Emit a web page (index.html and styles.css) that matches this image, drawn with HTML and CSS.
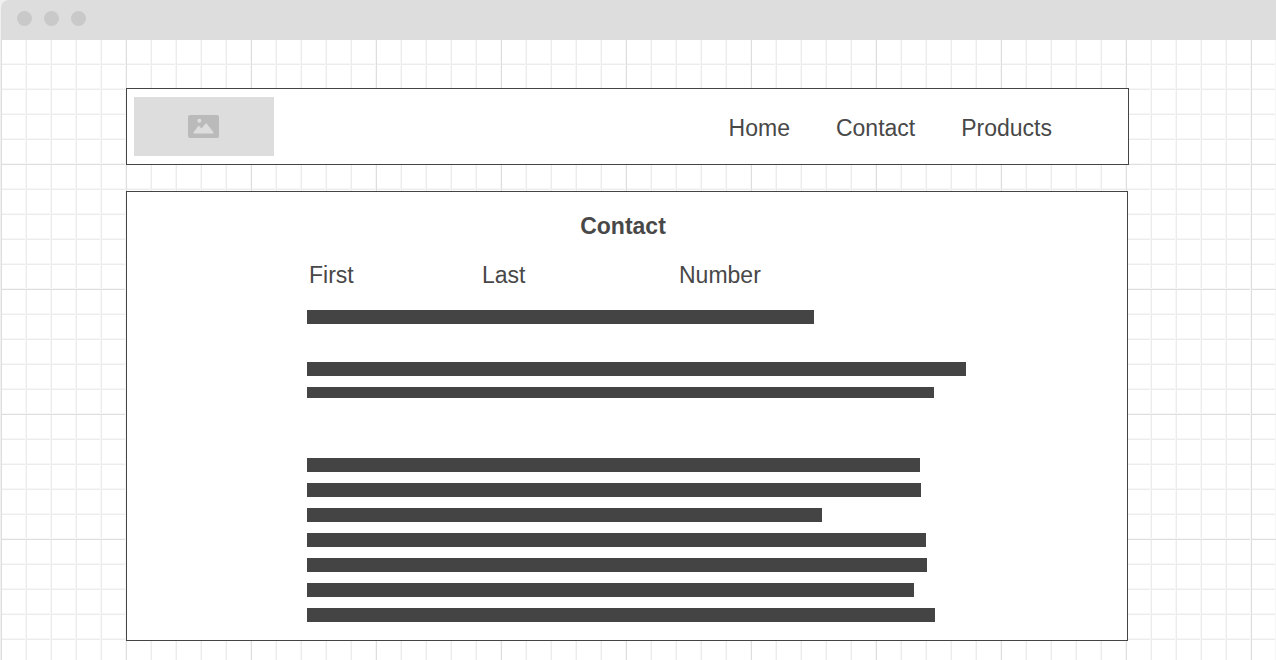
FILE: index.html
```html
<!DOCTYPE html>
<html lang="en">
<head>
<meta charset="utf-8">
<meta name="viewport" content="width=device-width, initial-scale=1">
<title>Contact</title>
<link rel="stylesheet" href="styles.css">
</head>
<body>
<div class="window">
  <div class="titlebar">
    <span class="dot"></span>
    <span class="dot"></span>
    <span class="dot"></span>
  </div>
  <div class="canvas">
    <header class="header">
      <div class="logo">
        <svg class="logo-icon" viewBox="0 0 31 23" role="img" aria-label="Logo">
          <rect width="31" height="23" rx="2" fill="#bababa"/>
          <circle cx="11.3" cy="5.8" r="2" fill="#ddd"/>
          <path d="M5.6 17.2 10.7 10.6 13.4 13.4 18.2 8 25.5 17.2 Q26 18.4 24.8 18.4 H6.2 Q5 18.4 5.6 17.2Z" fill="#ddd"/>
        </svg>
      </div>
      <nav class="nav">
        <a href="#home">Home</a>
        <a href="#contact">Contact</a>
        <a href="#products">Products</a>
      </nav>
    </header>
    <main class="panel">
      <h1 class="title">Contact</h1>
      <div class="columns">
        <span>First</span>
        <span>Last</span>
        <span>Number</span>
      </div>
      <div class="group">
        <div class="bar" style="width: 50.7%"></div>
      </div>
      <div class="group group-pair">
        <div class="bar" style="width: 65.9%"></div>
        <div class="bar bar-thin" style="width: 62.7%"></div>
      </div>
      <div class="group group-list">
        <div class="bar" style="width: 61.3%"></div>
        <div class="bar" style="width: 61.4%"></div>
        <div class="bar" style="width: 51.5%"></div>
        <div class="bar" style="width: 61.9%"></div>
        <div class="bar" style="width: 62%"></div>
        <div class="bar" style="width: 60.7%"></div>
        <div class="bar" style="width: 62.8%"></div>
      </div>
    </main>
  </div>
</div>
</body>
</html>
```
FILE: styles.css
```css
* {
  box-sizing: border-box;
}

body {
  margin: 0;
  background: #f0f0f0;
  color: #484848;
  font: 23px/26px "Liberation Sans", Arial, sans-serif;
}

.window {
  display: flex;
  flex-direction: column;
  min-height: 100vh;
  margin-left: 1px;
}

.titlebar {
  display: flex;
  align-items: center;
  gap: 12px;
  height: 40px;
  padding: 0 16px 3px;
  background: #ddd;
  border-top-left-radius: 8px;
}

.dot {
  width: 15px;
  height: 15px;
  border-radius: 50%;
  background: #c9c9c9;
}

/* Fine grid every 25px, stronger line every 125px, each with a faint leading edge. */
.canvas {
  flex: 1;
  padding: 48px 147px 19px 125px;
  background-color: #fff;
  background-image:
    linear-gradient(to right, #f7f7f7 1px, #dedede 1px 2px, transparent 2px),
    linear-gradient(#f7f7f7 1px, #dedede 1px 2px, transparent 2px),
    linear-gradient(to right, #f7f7f7 1px, #ececec 1px 2px, transparent 2px),
    linear-gradient(#f7f7f7 1px, #ececec 1px 2px, transparent 2px);
  background-size: 125px 125px, 125px 125px, 25px 25px, 25px 25px;
  background-position: -1px 0, 0 123px, -1px 0, 0 23px;
}

.header {
  display: flex;
  align-items: center;
  justify-content: space-between;
  padding: 8px 76px 8px 7px;
  border: 1px solid #444;
  background: #fff;
}

.logo {
  display: flex;
  align-items: center;
  width: 140px;
  height: 59px;
  padding-left: 54px;
  background: #ddd;
}

.logo-icon {
  width: 31px;
  height: 23px;
}

.nav {
  display: flex;
  gap: 46px;
  padding-top: 2px;
}

.nav a {
  color: inherit;
  text-decoration: none;
}

.panel {
  margin: 26px 1px 0 0;
  padding: 21px 0 18px;
  border: 1px solid #444;
  background: #fff;
}

.title {
  margin: 0;
  padding-right: 8px;
  font-size: 23px;
  line-height: 26px;
  text-align: center;
}

.columns {
  display: grid;
  grid-template-columns: 173px 197px auto;
  margin: 23px 0 22px 18%;
  padding-left: 2px;
}

.group {
  display: grid;
  gap: 11px;
}

.group-pair {
  margin-top: 38px;
}

.group-list {
  margin-top: 60px;
}

/* The width is a share of the panel, so the bars sit beside an 18% gutter. */
.bar {
  height: 14px;
  margin-left: 18%;
  background: #444;
}

.group .bar-thin {
  height: 11px;
}
```
